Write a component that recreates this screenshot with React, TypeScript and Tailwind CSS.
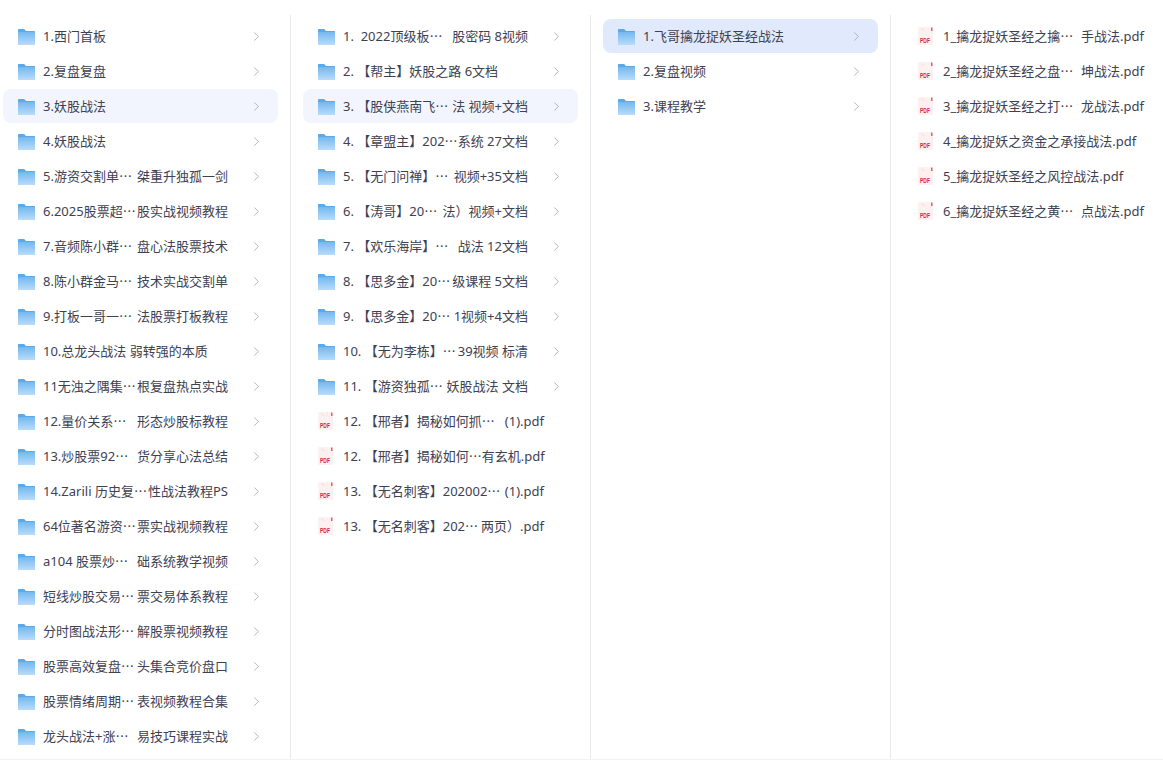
import { ChevronRight } from "lucide-react";

// "head|tail" means the name is cut in the middle, the tail sits flush right
const columns = [
  {
    active: 2,
    activeClass: "bg-[#f3f5fe]",
    items: [
      "1.西门首板",
      "2.复盘复盘",
      "3.妖股战法",
      "4.妖股战法",
      "5.游资交割单⋯|桀重升独孤一剑",
      "6.2025股票超⋯|股实战视频教程",
      "7.音频陈小群⋯|盘心法股票技术",
      "8.陈小群金马⋯|技术实战交割单",
      "9.打板一哥一⋯|法股票打板教程",
      "10.总龙头战法 弱转强的本质",
      "11无浊之隅集⋯|根复盘热点实战",
      "12.量价关系⋯|形态炒股标教程",
      "13.炒股票92⋯|货分享心法总结",
      "14.Zarili 历史复⋯|性战法教程PS",
      "64位著名游资⋯|票实战视频教程",
      "a104 股票炒⋯|础系统教学视频",
      "短线炒股交易⋯|票交易体系教程",
      "分时图战法形⋯|解股票视频教程",
      "股票高效复盘⋯|头集合竞价盘口",
      "股票情绪周期⋯|表视频教程合集",
      "龙头战法+涨⋯|易技巧课程实战",
    ],
  },
  {
    active: 2,
    activeClass: "bg-[#f3f5fe]",
    items: [
      "1.  2022顶级板⋯|股密码 8视频",
      "2. 【帮主】妖股之路 6文档",
      "3. 【股侠燕南飞⋯|法 视频+文档",
      "4. 【章盟主】202⋯|系统 27文档",
      "5. 【无门问禅】⋯|视频+35文档",
      "6. 【涛哥】20⋯|法）视频+文档",
      "7. 【欢乐海岸】⋯|战法 12文档",
      "8. 【思多金】20⋯|级课程 5文档",
      "9. 【思多金】20⋯|1视频+4文档",
      "10. 【无为李栋】⋯|39视频 标清",
      "11. 【游资独孤⋯|妖股战法 文档",
      "12. 【邢者】揭秘如何抓⋯|(1).pdf",
      "12. 【邢者】揭秘如何⋯|有玄机.pdf",
      "13. 【无名刺客】202002⋯|(1).pdf",
      "13. 【无名刺客】202⋯|两页）.pdf",
    ],
  },
  {
    active: 0,
    activeClass: "bg-[#e1e9fc]",
    items: ["1.飞哥擒龙捉妖圣经战法", "2.复盘视频", "3.课程教学"],
  },
  {
    active: -1,
    activeClass: "",
    items: [
      "1_擒龙捉妖圣经之擒⋯|手战法.pdf",
      "2_擒龙捉妖圣经之盘⋯|坤战法.pdf",
      "3_擒龙捉妖圣经之打⋯|龙战法.pdf",
      "4_擒龙捉妖之资金之承接战法.pdf",
      "5_擒龙捉妖圣经之风控战法.pdf",
      "6_擒龙捉妖圣经之黄⋯|点战法.pdf",
    ],
  },
];

function FolderIcon() {
  return (
    <svg width="17" height="16" viewBox="0 0 17 16" className="mt-px ml-px shrink-0">
      <defs>
        <linearGradient id="folder-fill" x1="0" y1="0" x2="0" y2="1">
          <stop offset="0" stopColor="#74b8ef" />
          <stop offset="1" stopColor="#b9dcfa" />
        </linearGradient>
      </defs>
      <path d="M0 1C0 .4.4 0 1 0h4.800c.3 0 .6.100.8.400L8 2h8c.6 0 1 .4 1 1v12c0 .6-.4 1-1 1H1c-.6 0-1-.4-1-1Z" fill="#5ca9ea" />
      <path d="M0 4c0-.6.400-1 1-1h15c.6 0 1 .4 1 1v11c0 .6-.4 1-1 1H1c-.6 0-1-.4-1-1Z" fill="url(#folder-fill)" />
    </svg>
  );
}

function PdfIcon() {
  return (
    <svg width="15" height="18" viewBox="0 0 15 18" className="ml-px shrink-0">
      <rect x="0" y="0" width="15" height="18" rx="1.500" fill="#fdf0f0" />
      <path d="M3 1.500 7 4" stroke="#f0d8d8" strokeWidth="0.700" fill="none" />
      <rect x="13.200" y="0.500" width="1.200" height="3.500" fill="#e23a3f" />
      <text x="2" y="15.500" fontSize="6.500" fontWeight="700" textLength="10" lengthAdjust="spacingAndGlyphs" fill="#d8282d" fontFamily="'Liberation Sans', sans-serif">PDF</text>
    </svg>
  );
}

function Row({ name, selected, activeClass }: { name: string; selected: boolean; activeClass: string }) {
  const isPdf = name.endsWith(".pdf");
  const [head, tail] = name.split("|");

  return (
    <div className={`flex h-[34px] items-center rounded-lg pl-[14px] ${selected ? activeClass : ""}`}>
      <div className="flex w-[26px] shrink-0">{isPdf ? <PdfIcon /> : <FolderIcon />}</div>
      <div className={`flex justify-between whitespace-pre text-[13px] leading-[20px] text-[#3e4152] ${isPdf ? "w-[201px]" : "w-[185px]"}`}>
        <span>{head}</span>
        {tail && <span>{tail}</span>}
      </div>
      {!isPdf && <ChevronRight className="ml-[21px] h-[15px] w-[15px] text-[#9a9da8]" strokeWidth={1.2} />}
    </div>
  );
}

export default function App() {
  return (
    <div className="h-[762px] w-[1163px] overflow-hidden bg-white font-['Noto_Sans','Noto_Sans_CJK_SC',sans-serif]">
      <div className="flex h-[760px] border-b border-[#f2f3f5] pt-[15px]">
        {columns.map((col, i) => (
          <div
            key={i}
            className={
              i < 3
                ? "mr-[9px] flex w-[291px] shrink-0 flex-col gap-px border-r border-[#e8eaed] pt-1 pr-3 pl-[3px]"
                : "flex flex-1 flex-col gap-px pt-1 pl-[3px]"
            }
          >
            {col.items.map((name, j) => (
              <Row key={j} name={name} selected={j === col.active} activeClass={col.activeClass} />
            ))}
          </div>
        ))}
      </div>
    </div>
  );
}
